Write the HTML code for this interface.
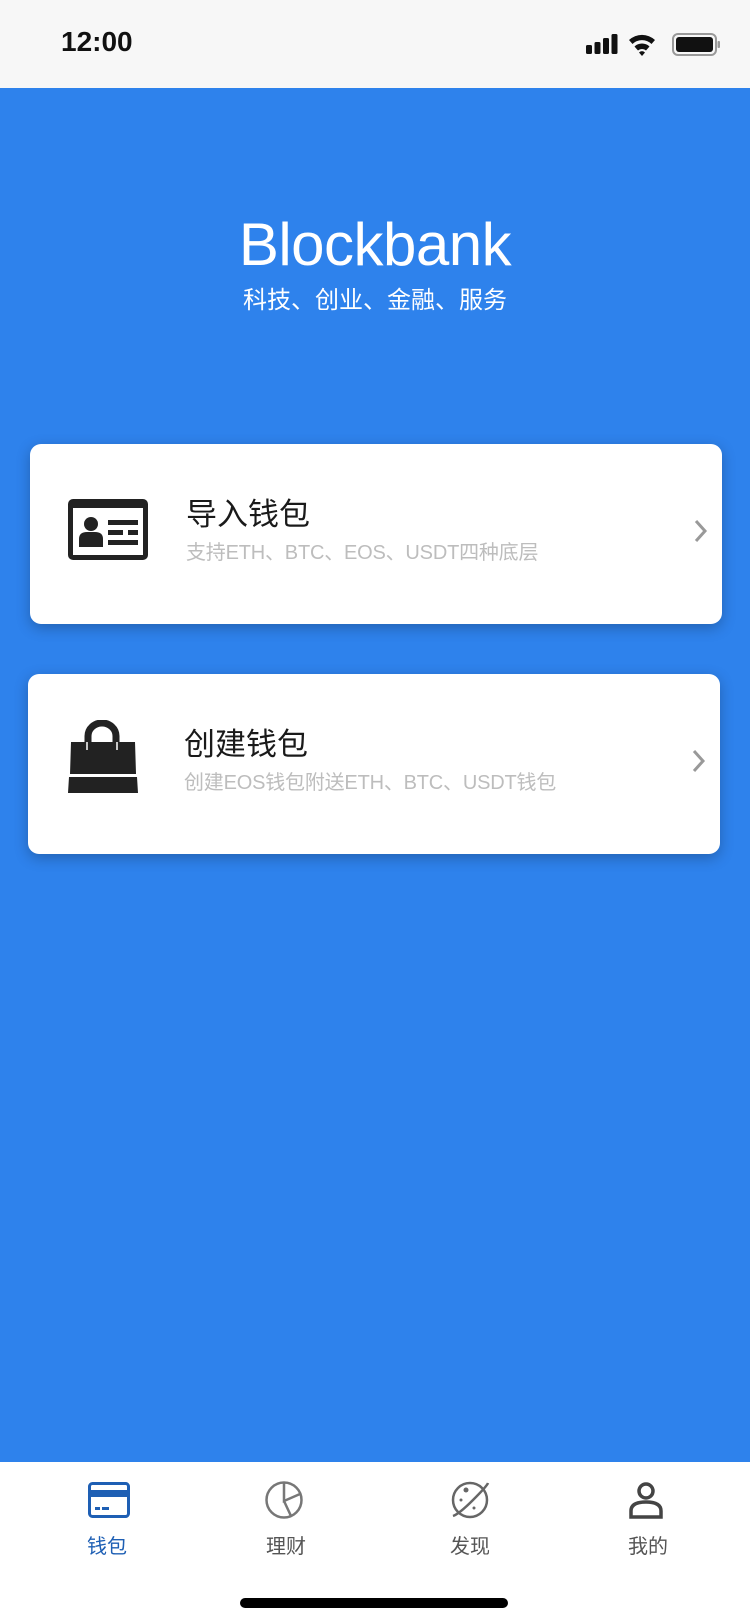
<!DOCTYPE html>
<html><head><meta charset="utf-8"><style>
*{margin:0;padding:0;box-sizing:border-box}
body{width:750px;height:1624px;position:relative;overflow:hidden;background:#2e82ec;font-family:"Liberation Sans","Noto Sans CJK SC",sans-serif}
.abs{position:absolute}
.status{left:0;top:0;width:750px;height:88px;background:#f7f7f7}
.card{background:#fff;border-radius:11px;box-shadow:0 4px 14px rgba(0,0,0,0.25)}
.t{font-size:31px;color:#1a1a1a;white-space:nowrap}
.s{font-size:20px;color:#bdbdbd;white-space:nowrap;letter-spacing:-0.2px}
.tab{position:absolute;top:1462px;left:0;width:750px;height:162px;background:#fff}
.lab{position:absolute;font-size:20px;color:#555;width:100px;text-align:center;top:68px}
</style></head><body>
<div class="abs status">
 <div class="abs" style="left:61px;top:26px;font-size:28px;font-weight:bold;color:#111">12:00</div>
 <svg class="abs" style="left:585px;top:32px" width="136" height="26" viewBox="0 0 136 26">
  <rect x="1" y="13" width="6" height="9" rx="1.5" fill="#111"/><rect x="9.5" y="10" width="6" height="12" rx="1.5" fill="#111"/><rect x="18" y="6" width="6" height="16" rx="1.5" fill="#111"/><rect x="26.5" y="2" width="6" height="20" rx="1.5" fill="#111"/>
  <path d="M44 8 A19 19 0 0 1 70 8 L66.5 12 A13.5 13.5 0 0 0 47.5 12Z M49.5 14.5 A11 11 0 0 1 64.5 14.5 L61 18.5 A6 6 0 0 0 53 18.5Z M54 20.5 A4 4 0 0 1 60 20.5 L57 24Z" fill="#111"/>
  <rect x="88" y="2" width="43" height="21" rx="5" fill="none" stroke="#999" stroke-width="2"/><rect x="91" y="5" width="37" height="15" rx="3" fill="#111"/><rect x="132.5" y="9" width="2.5" height="7" rx="1" fill="#999"/>
 </svg>
</div>
<div class="abs" style="left:0;width:750px;top:210px;text-align:center;color:#fff;font-size:60px;font-weight:300;letter-spacing:-0.5px">Blockbank</div>
<div class="abs" style="left:0;width:750px;top:280px;text-align:center;color:#fff;font-size:24px">科技、创业、金融、服务</div>

<div class="abs card" style="left:30px;top:444px;width:692px;height:180px"></div>
<svg class="abs" style="left:68px;top:499px" width="80" height="61" viewBox="0 0 80 61">
 <rect x="0" y="0" width="80" height="61" rx="5" fill="#222"/><rect x="5" y="9" width="70" height="47" fill="#fff"/>
 <circle cx="23" cy="25" r="7" fill="#222"/><path d="M11 48 v-8 q0-7 8-7 h8 q8 0 8 7 v8z" fill="#222"/>
 <rect x="40" y="21" width="30" height="5" fill="#222"/><rect x="40" y="31" width="15" height="5" fill="#222"/><rect x="60" y="31" width="10" height="5" fill="#222"/><rect x="40" y="41" width="30" height="5" fill="#222"/>
</svg>
<div class="abs t" style="left:186px;top:489px">导入钱包</div>
<div class="abs s" style="left:186px;top:536px">支持ETH、BTC、EOS、USDT四种底层</div>
<svg class="abs" style="left:693px;top:518px" width="16" height="26" viewBox="0 0 16 26"><path d="M3 3 L12 13 L3 23" fill="none" stroke="#999" stroke-width="3"/></svg>

<div class="abs card" style="left:28px;top:674px;width:692px;height:180px"></div>
<svg class="abs" style="left:67px;top:720px" width="72" height="74" viewBox="0 0 72 74">
 <path d="M4 22 H68 L69 54 H3Z" fill="#222"/><path d="M2 57 H70 L71 73 H1Z" fill="#222"/>
 <path d="M21 30 V16 a14 13 0 0 1 28 0 V30" fill="none" stroke="#222" stroke-width="7"/>
 <path d="M20 22 V30 M50 22 V30" stroke="#fff" stroke-width="1.5"/>
</svg>
<div class="abs t" style="left:184px;top:719px">创建钱包</div>
<div class="abs s" style="left:184px;top:766px">创建EOS钱包附送ETH、BTC、USDT钱包</div>
<svg class="abs" style="left:691px;top:748px" width="16" height="26" viewBox="0 0 16 26"><path d="M3 3 L12 13 L3 23" fill="none" stroke="#999" stroke-width="3"/></svg>

<div class="tab">
 <svg class="abs" style="left:88px;top:20px" width="42" height="36" viewBox="0 0 42 36"><rect x="1.5" y="1.5" width="39" height="33" rx="3" fill="none" stroke="#1e5fb4" stroke-width="3"/><rect x="1.5" y="8" width="39" height="7" fill="#1e5fb4"/><rect x="7" y="25" width="5" height="3" fill="#1e5fb4"/><rect x="14" y="25" width="7" height="3" fill="#1e5fb4"/></svg>
 <div class="lab" style="left:57px;color:#1e5fb4">钱包</div>
 <svg class="abs" style="left:264px;top:18px" width="40" height="40" viewBox="0 0 40 40"><circle cx="20" cy="20" r="17.5" fill="none" stroke="#777" stroke-width="2.5"/><path d="M20 2.5 V21 L36 14 M20 21 L27 36" fill="none" stroke="#777" stroke-width="2.5"/></svg>
 <div class="lab" style="left:236px">理财</div>
 <svg class="abs" style="left:449px;top:18px" width="42" height="40" viewBox="0 0 42 40"><circle cx="21" cy="20" r="17" fill="none" stroke="#666" stroke-width="2.5"/><path d="M4 36 Q10 34 24 20 Q38 6 39 3" fill="none" stroke="#666" stroke-width="2.5"/><circle cx="17" cy="10" r="2.5" fill="#666"/><circle cx="12" cy="20" r="1.5" fill="#666"/><circle cx="25" cy="28" r="1.5" fill="#666"/></svg>
 <div class="lab" style="left:420px">发现</div>
 <svg class="abs" style="left:628px;top:19px" width="36" height="38" viewBox="0 0 36 38"><circle cx="18" cy="10" r="7" fill="none" stroke="#444" stroke-width="3.5"/><path d="M3 36 V30 Q3 21 18 21 Q33 21 33 30 V36Z" fill="none" stroke="#444" stroke-width="3.5"/></svg>
 <div class="lab" style="left:598px">我的</div>
 <div class="abs" style="left:240px;top:136px;width:268px;height:10px;border-radius:5px;background:#000"></div>
</div>
</body></html>
